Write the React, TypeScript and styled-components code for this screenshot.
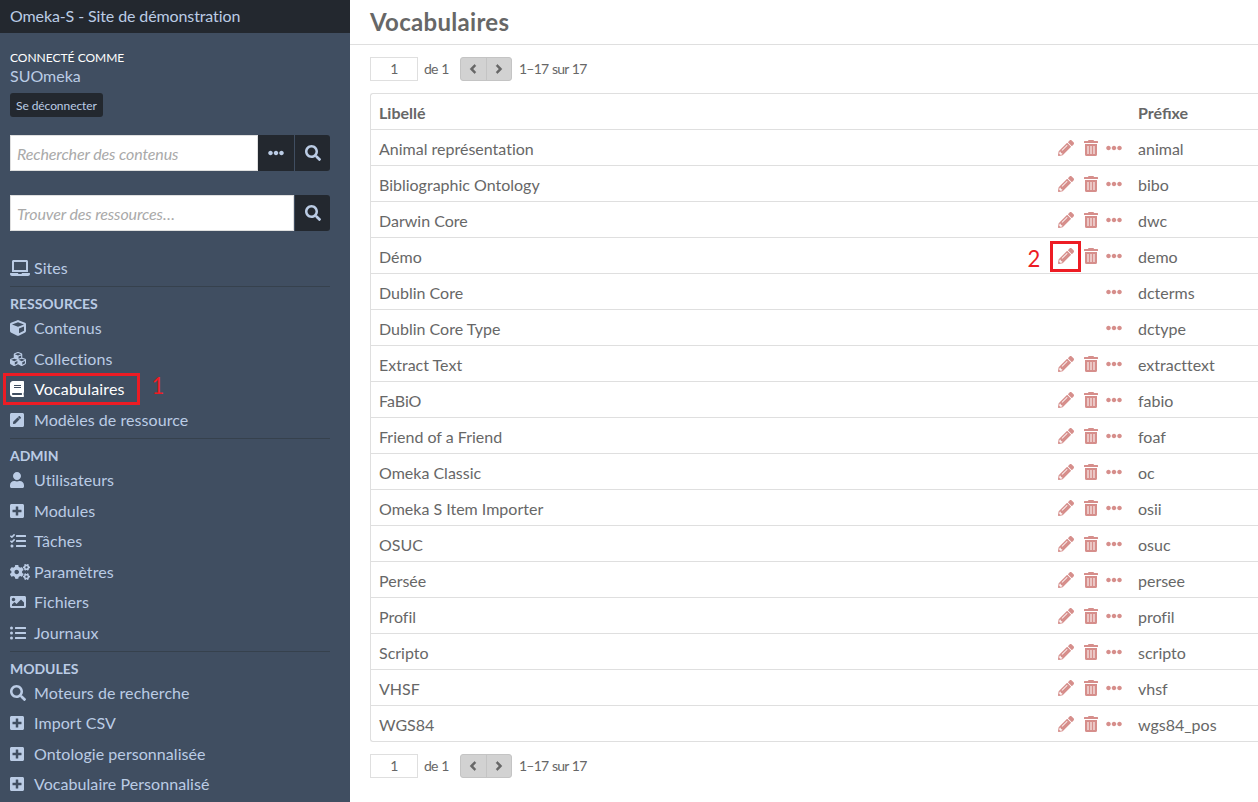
import React from "react";
import styled, { createGlobalStyle, css } from "styled-components";
import {
  FaAngleLeft, FaAngleRight, FaBook, FaCogs, FaCube, FaCubes, FaEllipsisH, FaImage, FaLaptop,
  FaListUl, FaPencilAlt, FaPenSquare, FaPlusSquare, FaSearch, FaTasks, FaUser,
} from "react-icons/fa";

const color = {
  side: "#404e61",
  dark: "#23282f",
  link: "#bbcce5",
  text: "#676767",
  rule: "#dfdfdf",
  action: "#d68e8b",
  mark: "#ed1c24",
};

const GlobalStyle = createGlobalStyle`
  *, *::before, *::after { box-sizing: border-box; }
  body {
    margin: 0;
    background: #fff;
    color: ${color.text};
    font: 16px/24px Lato, sans-serif;
    font-variant-ligatures: none;
    overflow: hidden;
  }
  button, input { font: inherit; letter-spacing: inherit; margin: 0; }
  svg { display: block; flex: none; }
`;

const Page = styled.div`
  display: flex;
  width: 100vw;
  height: 100vh;
  overflow: hidden;
`;

const Sidebar = styled.aside`
  flex: none;
  width: 350px;
  height: 100%;
  overflow: hidden;
  background: ${color.side};
  color: ${color.link};
`;

const SiteTitle = styled.header`
  height: 33px;
  padding: 0 10px;
  line-height: 31px;
  letter-spacing: -0.11px;
  background: ${color.dark};
`;

const SideBody = styled.div`
  padding: 15px 20px 0 10px;
`;

const UserBlock = styled.div`
  display: flex;
  flex-direction: column;
  align-items: flex-start;
  height: 87px;
`;

const Signed = styled.span`
  height: 19px;
  font-size: 12px;
  line-height: 19px;
  color: #fff;
  text-transform: uppercase;
`;

const UserName = styled.span`
  height: 18px;
  line-height: 18px;
`;

const Logout = styled.button`
  height: 24px;
  margin-top: 8px;
  padding: 1px 6px 0;
  border: 0;
  border-radius: 3px;
  background: ${color.dark};
  color: ${color.link};
  font-size: 12px;
  line-height: 24px;
  letter-spacing: -0.07px;
`;

const SearchForm = styled.form`
  display: flex;
  height: 36px;
  margin-bottom: 24px;
`;

const SearchInput = styled.input`
  flex: 1;
  min-width: 0;
  padding: 2px 6px 0;
  border: 1px solid #dfdfdf;
  border-radius: 0;
  background: #fff;
  letter-spacing: -0.11px;
  &::placeholder {
    color: #a9a9a9;
    font-style: italic;
    opacity: 1;
  }
`;

const SearchButton = styled.button<{ $last?: boolean }>`
  display: flex;
  align-items: center;
  justify-content: center;
  width: 36px;
  padding: 0;
  border: 0;
  border-left: ${(p) => (p.$last ? `1px solid ${color.side}` : "0")};
  border-radius: ${(p) => (p.$last ? "0 3px 3px 0" : "0")};
  background: ${color.dark};
  color: ${color.link};
`;

const NavSection = styled.nav<{ $first?: boolean }>`
  ${(p) =>
    p.$first
      ? css`
          height: 33px;
          margin-top: -2px;
        `
      : css`
          border-top: 1px solid #36414d;
          padding-bottom: 3px;
        `}
`;

const NavHeading = styled.h4`
  height: 26px;
  margin: 0;
  font-size: 14px;
  font-weight: 700;
  line-height: 34px;
  letter-spacing: -0.03px;
  text-transform: uppercase;
  nav:last-child > & { margin-bottom: -0.45px; }
`;

const NavItem = styled.a<{ $active?: boolean }>`
  position: relative;
  display: flex;
  align-items: center;
  height: 30.5px;
  color: ${(p) => (p.$active ? "#fff" : color.link)};
  letter-spacing: ${(p) => (p.$active ? "0.17px" : "0.06px")};
`;

const NavIcon = styled.span<{ $width: number }>`
  width: 24px;
  flex: none;
  svg { width: ${(p) => p.$width}px; height: 16px; }
`;

const Main = styled.main`
  flex: 1;
  min-width: 0;
`;

const PageTitle = styled.h1`
  height: 45px;
  margin: 0;
  padding: 0 20px;
  border-bottom: 1px solid ${color.rule};
  font-size: 24px;
  font-weight: 700;
  line-height: 44px;
  letter-spacing: 0.3px;
`;

const Content = styled.div`
  padding: 12px 0 0 20px;
`;

const Pager = styled.div`
  display: flex;
  align-items: center;
  height: 24px;
  font-size: 14px;
  line-height: 24px;
  letter-spacing: -0.75px;
  word-spacing: 0.6px;
`;

const PageInput = styled.input`
  width: 48px;
  height: 24px;
  padding: 0;
  border: 1px solid ${color.rule};
  color: ${color.text};
  text-align: center;
`;

const PageCount = styled.span`
  width: 42px;
  padding-left: 6px;
  white-space: nowrap;
`;

const Arrows = styled.span`
  display: flex;
  width: 52px;
  height: 24px;
  margin-right: 7px;
  border: 1px solid #c4c4c4;
  border-radius: 3px;
  background: #d2d2d2;
`;

const Arrow = styled.span`
  display: flex;
  flex: 1;
  align-items: center;
  justify-content: center;
  & + & { border-left: 1px solid #c4c4c4; }
`;

const Table = styled.div`
  margin: 12px 0;
  border: 1px solid ${color.rule};
  border-right: 0;
  border-radius: 3px 0 0 3px;
`;

const Row = styled.div<{ $head?: boolean }>`
  display: grid;
  grid-template-columns: 1fr 80px 120px;
  align-items: center;
  height: ${(p) => (p.$head ? 35 : 36)}px;
  padding-left: 8px;
  font-weight: ${(p) => (p.$head ? 700 : 400)};
  font-variant-ligatures: ${(p) => (p.$head ? "normal" : "none")};
  letter-spacing: normal;
  border-top: ${(p) => (p.$head ? "0" : `1px solid ${color.rule}`)};
`;

const Label = styled.span`
  padding-top: 3px;
`;

const Actions = styled.span`
  display: flex;
  justify-content: flex-end;
  align-items: center;
  padding-right: 16px;
  color: ${color.action};
`;

const Edit = styled.span`
  position: relative;
  margin-right: 10px;
`;

const Remove = styled.span`
  margin-right: 8px;
`;

const Frame = styled.span<{ $x: number; $y: number; $w: number; $h: number }>`
  position: absolute;
  left: ${(p) => p.$x}px;
  top: ${(p) => p.$y}px;
  width: ${(p) => p.$w}px;
  height: ${(p) => p.$h}px;
  border: 3px solid ${color.mark};
`;

const Digit = styled.span<{ $x: number; $y: number }>`
  position: absolute;
  left: ${(p) => p.$x}px;
  top: ${(p) => p.$y}px;
  color: ${color.mark};
  font-size: 24px;
  line-height: 24px;
  transform: scaleX(0.92);
`;

const TrashIcon = () => (
  <svg width="14" height="16" viewBox="0 0 14 16" fill="currentColor">
    <path
      fillRule="evenodd"
      d="M.5 1H4l.5-1h5l.5 1h3.500q.5 0 .5.5V3H0V1.500Q0 1 .5 1ZM1 4h12v10.500q0 1.500-1.500 1.500h-9Q1 16 1 14.500ZM3.500 6v8h1V6ZM6.500 6v8h1V6ZM9.500 6v8h1V6Z"
    />
  </svg>
);

/* icon, width of its glyph at 16px height, label */
type Item = [React.ComponentType, number, string];

const sections: { title: string; items: Item[] }[] = [
  {
    title: "Ressources",
    items: [
      [FaCube, 16, "Contenus"],
      [FaCubes, 16, "Collections"],
      [FaBook, 14, "Vocabulaires"],
      [FaPenSquare, 14, "Modèles de ressource"],
    ],
  },
  {
    title: "Admin",
    items: [
      [FaUser, 14, "Utilisateurs"],
      [FaPlusSquare, 14, "Modules"],
      [FaTasks, 16, "Tâches"],
      [FaCogs, 20, "Paramètres"],
      [FaImage, 16, "Fichiers"],
      [FaListUl, 16, "Journaux"],
    ],
  },
  {
    title: "Modules",
    items: [
      [FaSearch, 16, "Moteurs de recherche"],
      [FaPlusSquare, 14, "Import CSV"],
      [FaPlusSquare, 14, "Ontologie personnalisée"],
      [FaPlusSquare, 14, "Vocabulaire Personnalisé"],
    ],
  },
];

const vocabularies: [string, string][] = [
  ["Animal représentation", "animal"],
  ["Bibliographic Ontology", "bibo"],
  ["Darwin Core", "dwc"],
  ["Démo", "demo"],
  ["Dublin Core", "dcterms"],
  ["Dublin Core Type", "dctype"],
  ["Extract Text", "extracttext"],
  ["FaBiO", "fabio"],
  ["Friend of a Friend", "foaf"],
  ["Omeka Classic", "oc"],
  ["Omeka S Item Importer", "osii"],
  ["OSUC", "osuc"],
  ["Persée", "persee"],
  ["Profil", "profil"],
  ["Scripto", "scripto"],
  ["VHSF", "vhsf"],
  ["WGS84", "wgs84_pos"],
];

const locked = ["dcterms", "dctype"];

const Pagination = () => (
  <Pager>
    <PageInput defaultValue="1" />
    <PageCount>de 1</PageCount>
    <Arrows>
      <Arrow><FaAngleLeft size={14} strokeWidth={16} /></Arrow>
      <Arrow><FaAngleRight size={14} strokeWidth={16} /></Arrow>
    </Arrows>
    <span>1–17 sur 17</span>
  </Pager>
);

export default function App() {
  return (
    <Page>
      <GlobalStyle />
      <Sidebar>
        <SiteTitle>Omeka-S - Site de démonstration</SiteTitle>
        <SideBody>
          <UserBlock>
            <Signed>Connecté comme</Signed>
            <UserName>SUOmeka</UserName>
            <Logout>Se déconnecter</Logout>
          </UserBlock>
          <SearchForm>
            <SearchInput placeholder="Rechercher des contenus" />
            <SearchButton type="button"><FaEllipsisH size={16} /></SearchButton>
            <SearchButton type="button" $last><FaSearch size={16} /></SearchButton>
          </SearchForm>
          <SearchForm>
            <SearchInput placeholder="Trouver des ressources…" />
            <SearchButton type="button" $last><FaSearch size={16} /></SearchButton>
          </SearchForm>
          <NavSection $first>
            <NavItem>
              <NavIcon $width={20}><FaLaptop /></NavIcon>Sites
            </NavItem>
          </NavSection>
          {sections.map((section) => (
            <NavSection key={section.title}>
              <NavHeading>{section.title}</NavHeading>
              {section.items.map(([Icon, width, label]) => (
                <NavItem key={label} $active={label === "Vocabulaires"}>
                  <NavIcon $width={width}><Icon /></NavIcon>
                  {label}
                  {label === "Vocabulaires" && (
                    <>
                      <Frame $x={-7} $y={-1} $w={137} $h={32} />
                      <Digit $x={141} $y={-1}>1</Digit>
                    </>
                  )}
                </NavItem>
              ))}
            </NavSection>
          ))}
        </SideBody>
      </Sidebar>
      <Main>
        <PageTitle>Vocabulaires</PageTitle>
        <Content>
          <Pagination />
          <Table>
            <Row $head>
              <Label>Libellé</Label>
              <span />
              <Label>Préfixe</Label>
            </Row>
            {vocabularies.map(([label, prefix]) => (
              <Row key={prefix}>
                <Label>{label}</Label>
                <Actions>
                  {!locked.includes(prefix) && (
                    <>
                      <Edit>
                        <FaPencilAlt size={16} />
                        {prefix === "demo" && (
                          <>
                            <Frame $x={-8} $y={-7} $w={31} $h={31} />
                            <Digit $x={-31} $y={-2}>2</Digit>
                          </>
                        )}
                      </Edit>
                      <Remove><TrashIcon /></Remove>
                    </>
                  )}
                  <FaEllipsisH size={16} />
                </Actions>
                <Label>{prefix}</Label>
              </Row>
            ))}
          </Table>
          <Pagination />
        </Content>
      </Main>
    </Page>
  );
}
